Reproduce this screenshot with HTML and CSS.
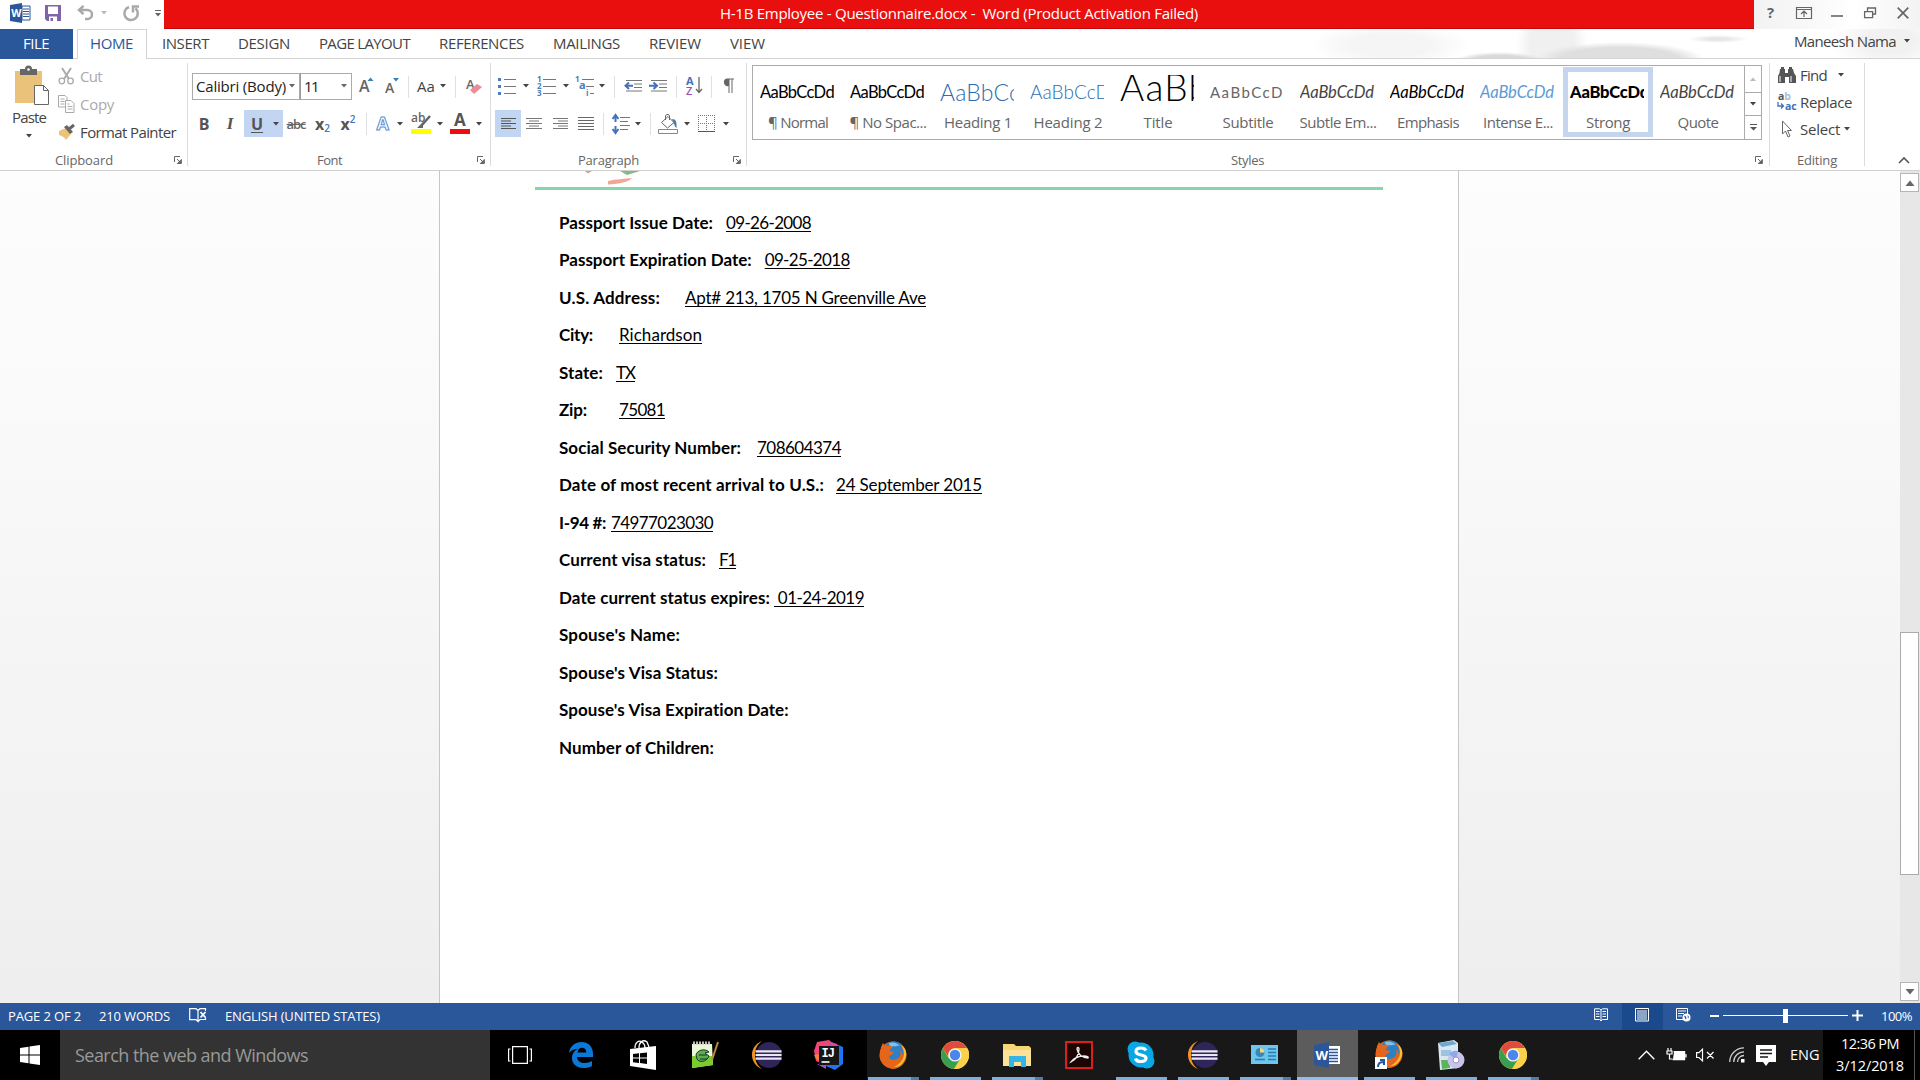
FILE: index.html
```html
<!DOCTYPE html>
<html lang="en">
<head>
<meta charset="utf-8">
<title>H-1B Employee - Questionnaire.docx - Word</title>
<link rel="stylesheet" href="styles.css">
</head>
<body>
<svg width="0" height="0" class="defs">
  <symbol id="caret" viewBox="0 0 6 4"><path d="M0 0h6L3 3.6z" fill="currentColor"/></symbol>
  <symbol id="launch" viewBox="0 0 8 8"><path d="M.5 6V.5H6M3 3l3.500 3.500M7.300 3.500v4h-4z" fill="none" stroke="#666"/><path d="M7.500 3.500v4h-4z" fill="#666"/></symbol>
  <symbol id="chrome" viewBox="0 0 28 28">
    <circle cx="14" cy="14" r="14" fill="#fbd04b"/>
    <path d="M1.900 7A14 14 0 0 0 13 28L19.500 17.500 14 14 7.500 17z" fill="#3a9e4f"/>
    <path d="M26.100 7H14l6 10.500L13 28A14 14 0 0 0 26.100 7z" fill="#fbd04b"/>
    <path d="M1.900 7A14 14 0 0 1 26.100 7H14a7 7 0 0 0-6.500 9z" fill="#e04a3f"/>
    <circle cx="14" cy="14" r="6.600" fill="#f4f4f4"/><circle cx="14" cy="14" r="5.200" fill="#4a86ee"/>
  </symbol>
  <symbol id="firefox" viewBox="0 0 28 28">
    <circle cx="14" cy="14" r="13.500" fill="#e8701a"/>
    <circle cx="15" cy="11.500" r="11" fill="#2f7fc4"/>
    <path d="M10 2a11 11 0 0 1 11 3c-3-1-4 1-7 0-1 2-4 1-4-3z" fill="#7cc3ec"/>
    <path d="M2 6c1-1 1-3 2-4 1 2 3 3 5 3 2-1 3 0 5 1-2 1-3 2-3 4 1 1 3 0 4 1-1 3-4 3-5 5 1 3 5 4 8 2 4-2 4-6 3-9 2 2 2 3 3 5 1-5-1-8-4-11 6 2 8 8 7 13-1 7-7 12-13 12C5 27 0 20 1 13c0-3 1-5 1-7z" fill="#e5651a"/>
    <path d="M22 4c5 3 6.500 9 4 14-2 5-6 8-11 8 6-3 10-8 10-13 0-4-1-6-3-9z" fill="#f9c22e"/>
  </symbol>
  <symbol id="eclipse" viewBox="0 0 30 28">
    <path d="M10 0C3 3 0 8 0 14s4 12 10 14C5 24 3 20 3 14S5 4 10 0z" fill="#f0942a"/>
    <circle cx="17" cy="14" r="13" fill="#2f2558"/>
    <path d="M3.500 10.300h26M3.500 14h26M3.500 17.700h26" stroke="#e9e7f2" stroke-width="2.200"/>
  </symbol>
</svg>

<header class="titlebar">
  <div class="qat">
    <svg width="21" height="20" viewBox="0 0 21 20"><path d="M12 3h8v14h-8z" fill="#fff" stroke="#2b579a"/><path d="M13 6h6M13 8.500h6M13 11h6M13 13.500h6" stroke="#2b579a"/><path d="M0 2 12 0v20L0 18z" fill="#2b579a"/><text x="1.200" y="14" class="ico-w" font-size="10.500">W</text></svg>
    <svg width="16" height="16" viewBox="0 0 16 16"><path d="M0 0h16v16H2l-2-2z" fill="#8064a8"/><path d="M3 1.500h10V9H3zM4 11.500h8V16H4z" fill="#fff"/><path d="M5.500 13h2.500v3H5.500z" fill="#8064a8"/></svg>
    <svg width="18" height="16" viewBox="0 0 18 16"><path d="M2 5h8.500a4.500 4.500 0 0 1 0 9H8M6.500 .8 2 5l4.500 4.200" fill="none" stroke="#a9a9a9" stroke-width="2.500"/></svg>
    <svg class="lt" width="6" height="4"><use href="#caret"/></svg>
    <svg width="17" height="17" viewBox="0 0 17 17"><path d="M6 2a6.700 6.700 0 1 0 6.500 1.300" fill="none" stroke="#a9a9a9" stroke-width="2.500"/><path d="M10 7.500V1.500h6" fill="none" stroke="#a9a9a9" stroke-width="2.500"/></svg>
    <svg width="6" height="7" viewBox="0 0 6 7"><path d="M0 .5h6" stroke="#666"/><path d="M0 3h6L3 6.500z" fill="#666"/></svg>
  </div>
  <div class="title"><span data-w="478">H-1B Employee - Questionnaire.docx -&nbsp; Word (Product Activation Failed)</span></div>
  <div class="winbtns">
    <b>?</b>
    <svg width="16" height="12" viewBox="0 0 16 12"><path d="M.5.5h15v11H.5zM.5 2.500h15M8 10V4.500M5 7l3-3 3 3" fill="none" stroke="#666" stroke-width="1.200"/></svg>
    <svg width="12" height="12" viewBox="0 0 12 12"><path d="M0 9h12" stroke="#666" stroke-width="1.600"/></svg>
    <svg width="12" height="12" viewBox="0 0 12 12"><path d="M.6 4.600h8v6h-8zM3.500 4V1h8v6H9" fill="none" stroke="#666" stroke-width="1.300"/></svg>
    <svg width="12" height="12" viewBox="0 0 12 12"><path d="m.7.7 10.600 10.600M11.300.7.7 11.300" stroke="#666" stroke-width="1.700"/></svg>
  </div>
</header>

<nav class="tabs">
  <div class="file"><span data-w="26">FILE</span></div>
  <div class="home"><span data-w="43">HOME</span></div>
  <div class="tab"><span data-w="47">INSERT</span></div>
  <div class="tab"><span data-w="52">DESIGN</span></div>
  <div class="tab"><span data-w="91">PAGE LAYOUT</span></div>
  <div class="tab"><span data-w="85">REFERENCES</span></div>
  <div class="tab"><span data-w="67">MAILINGS</span></div>
  <div class="tab"><span data-w="52">REVIEW</span></div>
  <div class="tab"><span data-w="35">VIEW</span></div>
  <div class="user"><span data-w="102">Maneesh Nama</span><svg width="6" height="4"><use href="#caret"/></svg></div>
</nav>

<section class="ribbon">
  <div class="group clip">
    <div class="clip-body">
      <div class="paste">
        <svg width="36" height="40" viewBox="0 0 36 40"><path d="M1 5h27v32H1z" fill="#ebc27a"/><path d="M6 3h5a3.500 3.500 0 0 1 7 0h5v6H6z" fill="#666"/><circle cx="14.500" cy="3.500" r="1.300" fill="#fff"/><path d="M20.500 19.500h9l5 5v14h-14z" fill="#fff" stroke="#666"/><path d="M29.500 19.500v5h5" fill="none" stroke="#666"/></svg>
        <span data-w="34">Paste</span>
        <svg width="6" height="4"><use href="#caret"/></svg>
      </div>
      <div class="clip-list">
        <div class="off"><svg width="17" height="18" viewBox="0 0 17 18"><path d="M4 1l7 11M13 1L6 12" stroke="#aaa" stroke-width="2"/><circle cx="3.800" cy="14" r="2.800" fill="none" stroke="#aaa" stroke-width="1.300"/><circle cx="12.500" cy="14" r="2.800" fill="none" stroke="#aaa" stroke-width="1.300"/></svg><span data-w="22">Cut</span></div>
        <div class="off"><svg width="17" height="18" viewBox="0 0 17 18"><path d="M7 12H.5V.5H7l2 2V5M2.500 4h4M2.500 6.500h4M2.500 9h4M7.500 5.500H13l3 3v9H7.500zM9.500 9h2M9.500 11.500h5M9.500 14h5" fill="none" stroke="#aaa"/></svg><span data-w="34">Copy</span></div>
        <div><svg width="17" height="18" viewBox="0 0 17 18"><path d="M1 8l7-3 5 6-5 6c-2-3-4-4-7-5z" fill="#ebc27a"/><path d="M6 4l3-2 6 7-3 2z" fill="#666"/><path d="m11 6 5-4" stroke="#666" stroke-width="3"/></svg><span data-w="96">Format Painter</span></div>
      </div>
    </div>
    <div class="foot"><span data-w="58">Clipboard</span><svg width="8" height="8"><use href="#launch"/></svg></div>
  </div>
  <i class="sep"></i>

  <div class="group font">
    <div class="f1">
      <div class="combo"><div class="clipname"><span data-w="90">Calibri (Body)</span></div><svg width="6" height="4"><use href="#caret"/></svg></div>
      <div class="combo"><span data-w="14">11</span><svg width="6" height="4"><use href="#caret"/></svg></div>
      <svg width="16" height="18" viewBox="0 0 16 18"><text x="0" y="15" class="ga" font-size="16">A</text><path d="M8.500 4h6l-3-3.500z" fill="#3a7fb8"/></svg>
      <svg width="14" height="18" viewBox="0 0 14 18"><text x="0" y="16" class="ga" font-size="14">A</text><path d="M8 1h6l-3 3.500z" fill="#3a7fb8"/></svg>
      <i class="tick"></i>
      <span class="aa" data-w="18">Aa</span>
      <svg width="6" height="4"><use href="#caret"/></svg>
      <i class="tick"></i>
      <svg width="17" height="18" viewBox="0 0 17 18"><text x="0" y="12" class="ga" font-size="13">A</text><path d="m4 13 7-6 5 3-8 7z" fill="#ec8b97"/></svg>
    </div>
    <div class="f2">
      <b class="g">B</b><b class="g it">I</b>
      <div class="ubox"><b class="g un">U</b><svg width="6" height="4"><use href="#caret"/></svg></div>
      <span class="strike" data-w="19">abc</span>
      <span class="g sx"><b>x</b><em>2</em></span>
      <span class="g sx up"><b>x</b><em>2</em></span>
      <i class="tick"></i>
      <svg width="18" height="20" viewBox="0 0 18 20"><text x="2.500" y="16" font-size="18" class="fx">A</text></svg>
      <svg width="6" height="4"><use href="#caret"/></svg>
      <svg width="21" height="21" viewBox="0 0 21 21"><text x="0" y="9" font-size="12" class="ga">ab</text><path d="m19 3-8 9" stroke="#666" stroke-width="2.500"/><path d="m12 9-6 6h6z" fill="#666"/><path d="M0 16h20v5H0z" fill="#ff0"/></svg>
      <svg width="6" height="4"><use href="#caret"/></svg>
      <svg width="20" height="21" viewBox="0 0 20 21"><text x="4" y="13" font-size="17" class="gb">A</text><path d="M0 16h20v5H0z" fill="#f00b12"/></svg>
      <svg width="6" height="4"><use href="#caret"/></svg>
    </div>
    <div class="foot"><span data-w="25">Font</span><svg width="8" height="8"><use href="#launch"/></svg></div>
  </div>
  <i class="sep"></i>

  <div class="group para">
    <div class="p1">
      <svg width="18" height="18" viewBox="0 0 18 18"><path d="M6 2.500h12M6 9.500h12M6 16.500h12" stroke="#777"/><path d="M0 1h3v3H0zM0 8h3v3H0zM0 15h3v3H0z" fill="#4a7ebb"/></svg>
      <svg width="6" height="4"><use href="#caret"/></svg>
      <svg width="19" height="20" viewBox="0 0 19 20"><path d="M6 3.500h13M6 10.500h13M6 17.500h13" stroke="#777"/><g class="nm"><text x="0" y="6">1</text><text x="0" y="13">2</text><text x="0" y="20">3</text></g></svg>
      <svg width="6" height="4"><use href="#caret"/></svg>
      <svg width="20" height="20" viewBox="0 0 20 20"><path d="M7 3.500h12M11 10.500h8M15 17.500h4" stroke="#777"/><g class="nm"><text x="0" y="6">1</text><text x="4" y="13" font-size="11">a</text><text x="11" y="20">i</text></g></svg>
      <svg width="6" height="4"><use href="#caret"/></svg>
      <i class="tick"></i>
      <svg width="18" height="12" viewBox="0 0 18 12"><path d="M2 .5h16M10 4h8M10 7.500h8M2 11h16" stroke="#777"/><path d="M2 5.700h7M5 2.500 1.500 5.700 5 9" fill="none" stroke="#4472b8" stroke-width="2"/></svg>
      <svg width="18" height="12" viewBox="0 0 18 12"><path d="M2 .5h16M10 4h8M10 7.500h8M2 11h16" stroke="#777"/><path d="M0 5.700h7M4.500 2.500 8 5.700 4.500 9" fill="none" stroke="#4472b8" stroke-width="2"/></svg>
      <i class="tick"></i>
      <svg width="17" height="20" viewBox="0 0 17 20"><text x="0" y="9" font-size="11" class="bl">A</text><text x="0" y="19" font-size="11" class="pu">Z</text><path d="M13 1v15M10 13l3 3.500 3-3.500" fill="none" stroke="#666" stroke-width="1.300"/></svg>
      <i class="tick"></i>
      <svg width="11" height="15" viewBox="0 0 11 15"><path d="M4 .5h7v1H9.500V15h-1V1.500h-2V15h-1V8A3.800 3.800 0 0 1 4 .5z" fill="#666"/></svg>
    </div>
    <div class="p2">
      <div class="on"><svg width="15" height="12" viewBox="0 0 15 12"><path d="M0 .5h15M0 3h10M0 5.500h15M0 8h10M0 10.500h15" stroke="#555"/></svg></div>
      <svg width="16" height="12" viewBox="0 0 16 12"><path d="M0 .5h16M3 3h10M0 5.500h16M3 8h10M0 10.500h16" stroke="#777"/></svg>
      <svg width="15" height="12" viewBox="0 0 15 12"><path d="M0 .5h15M5 3h10M0 5.500h15M5 8h10M0 10.500h15" stroke="#777"/></svg>
      <svg width="16" height="14" viewBox="0 0 16 14"><path d="M0 .5h16M0 3.500h16M0 6.500h16M0 9.500h16M0 12.500h16" stroke="#666"/></svg>
      <i class="tick"></i>
      <svg width="18" height="20" viewBox="0 0 18 20"><path d="M8 3.500h10M8 7.500h8M8 11.500h10M8 15.500h8" stroke="#777"/><path d="M3.500 2v6M3.500 12v6M.5 5l3-4 3 4M.5 15l3 4 3-4" fill="none" stroke="#4472b8" stroke-width="2"/></svg>
      <svg width="6" height="4"><use href="#caret"/></svg>
      <i class="tick"></i>
      <svg width="20" height="20" viewBox="0 0 20 20"><path d="M.5 15.500h19v4H.5z" fill="#fff" stroke="#888"/><path d="m10 2.500 6 6-6.500 5.500-6-5.500zM7.500 6V3a2 2 0 0 1 4-1v4" fill="none" stroke="#666"/><path d="M14 5c4 0 5 3 4.500 9-2-1-2-4-3-5z" fill="#4a7ea8"/></svg>
      <svg width="6" height="4"><use href="#caret"/></svg>
      <svg width="17" height="17" viewBox="0 0 17 17"><path d="M.5 0v17M16.500 0v17M8.500 0v17M0 .5h17M0 8.500h17" stroke="#777" stroke-dasharray="1 1"/><path d="M0 16.500h17" stroke="#555"/></svg>
      <svg width="6" height="4"><use href="#caret"/></svg>
    </div>
    <div class="foot"><span data-w="61">Paragraph</span><svg width="8" height="8"><use href="#launch"/></svg></div>
  </div>
  <i class="sep"></i>

  <div class="group styles">
    <div class="gallery">
      <div class="cards">
        <div class="card"><div class="pv"><span data-w="74">AaBbCcDd</span></div><span data-w="60">¶ Normal</span></div>
        <div class="card"><div class="pv"><span data-w="74">AaBbCcDd</span></div><span data-w="77">¶ No Spac...</span></div>
        <div class="card"><div class="pv h1"><span data-w="80">AaBbCc</span></div><span data-w="68">Heading 1</span></div>
        <div class="card"><div class="pv h2"><span data-w="80">AaBbCcD</span></div><span data-w="69">Heading 2</span></div>
        <div class="card"><div class="pv tt"><span data-w="90">AaBb</span></div><span data-w="29">Title</span></div>
        <div class="card"><div class="pv st"><span data-w="74">AaBbCcD</span></div><span data-w="51">Subtitle</span></div>
        <div class="card"><div class="pv i1"><span data-w="74">AaBbCcDd</span></div><span data-w="77">Subtle Em...</span></div>
        <div class="card"><div class="pv i2"><span data-w="74">AaBbCcDd</span></div><span data-w="62">Emphasis</span></div>
        <div class="card"><div class="pv i3"><span data-w="74">AaBbCcDd</span></div><span data-w="70">Intense E...</span></div>
        <div class="card sel"><div class="pv sb"><span data-w="79">AaBbCcDd</span></div><span data-w="44">Strong</span></div>
        <div class="card"><div class="pv i4"><span data-w="74">AaBbCcDd</span></div><span data-w="41">Quote</span></div>
      </div>
      <div class="gscroll">
        <div class="lt"><svg class="flip" width="6" height="4"><use href="#caret"/></svg></div>
        <div><svg width="6" height="4"><use href="#caret"/></svg></div>
        <div><svg width="7" height="7" viewBox="0 0 7 7"><path d="M0 .5h7" stroke="#555"/><path d="M0 3h7L3.500 6.500z" fill="#555"/></svg></div>
      </div>
    </div>
    <div class="foot"><span data-w="33">Styles</span><svg width="8" height="8"><use href="#launch"/></svg></div>
  </div>
  <i class="sep"></i>

  <div class="group edit">
    <div class="elist">
      <div><svg width="20" height="18" viewBox="0 0 20 18"><path d="M3 3h5v4h3V3h5l1 4 2 3v7h-7v-6H8v6H1v-7l1.500-3z" fill="#555"/><path d="M4 1h3v2H4zM12 1h3v2h-3z" fill="#555"/><path d="M3 10v6M14 10v6" stroke="#fff"/></svg><span data-w="27">Find</span><svg class="c1" width="6" height="4"><use href="#caret"/></svg></div>
      <div><svg width="20" height="18" viewBox="0 0 20 18"><text x="1" y="7" font-size="10.500" class="gb">a<tspan class="lb">b</tspan></text><text x="8" y="17" font-size="10.500" class="bl">ac</text><path d="M1 9v4h5M4 10.500 6.500 13 4 15.500" fill="none" stroke="#4472b8" stroke-width="1.300"/></svg><span data-w="52">Replace</span></div>
      <div><svg width="20" height="18" viewBox="0 0 20 18"><path d="M5.500 1v13l3-3 2.500 6 2-1-2.500-5.500h4z" fill="#fff" stroke="#666"/></svg><span data-w="40">Select</span><svg class="c2" width="6" height="4"><use href="#caret"/></svg></div>
    </div>
    <div class="foot"><span data-w="40">Editing</span></div>
  </div>
  <i class="sep"></i>
  <svg class="collapse" width="12" height="8" viewBox="0 0 12 8"><path d="m1 7 5-5 5 5" fill="none" stroke="#555" stroke-width="1.600"/></svg>
</section>

<main class="work">
  <article class="page">
    <div class="letterhead">
      <svg width="100" height="14" viewBox="0 0 100 14"><path d="M3 0h7L6 2.500z" fill="#c9a98f"/><path d="M38 0h20l-13 4z" fill="#86b888"/><path d="M26 10c8-2 16-2 24-3-4 4-12 6-24 6.500z" fill="#f0a795"/></svg>
    </div>
    <div class="lines">
      <p><b data-w="154">Passport Issue Date:</b><u class="g13" data-w="85">09-26-2008</u></p>
      <p><b data-w="193">Passport Expiration Date:</b><u class="g13" data-w="85">09-25-2018</u></p>
      <p><b data-w="101">U.S. Address:</b><u class="g25" data-w="241">Apt# 213, 1705 N Greenville Ave</u></p>
      <p><b data-w="34">City:</b><u class="g26" data-w="83">Richardson</u></p>
      <p><b data-w="44">State:</b><u class="g13" data-w="19">TX</u></p>
      <p><b data-w="28">Zip:</b><u class="g32" data-w="46">75081</u></p>
      <p><b data-w="182">Social Security Number:</b><u class="g16" data-w="84">708604374</u></p>
      <p><b data-w="265">Date of most recent arrival to U.S.:</b><u class="g12" data-w="146">24 September 2015</u></p>
      <p><b data-w="47">I-94 #:</b><u class="g5" data-w="102">74977023030</u></p>
      <p><b data-w="147">Current visa status:</b><u class="g13" data-w="17">F1</u></p>
      <p><b data-w="211">Date current status expires:</b><u class="g4" data-w="90">&nbsp;01-24-2019</u></p>
      <p><b data-w="121">Spouse's Name:</b></p>
      <p><b data-w="159">Spouse's Visa Status:</b></p>
      <p><b data-w="230">Spouse's Visa Expiration Date:</b></p>
      <p><b data-w="155">Number of Children:</b></p>
    </div>
  </article>
  <div class="vbar">
    <div class="vbtn"><svg class="flip" width="10" height="6"><use href="#caret"/></svg></div>
    <div class="thumb"></div>
    <div class="vbtn end"><svg width="10" height="6"><use href="#caret"/></svg></div>
  </div>
</main>

<footer class="status">
  <span data-w="73">PAGE 2 OF 2</span>
  <span class="s2" data-w="71">210 WORDS</span>
  <svg class="s3" width="18" height="15" viewBox="0 0 18 15"><path d="M9 2.500 7 .7H.7v11H7L9 13.500V2.500l2-1.800h5.500V3M16.500 9.500v2H11l-2 2" fill="none" stroke="#fff" stroke-width="1.200"/><path d="m11.500 4 5 5.500M16.500 4l-5 5.500" stroke="#fff" stroke-width="1.800"/></svg>
  <span class="s4" data-w="155">ENGLISH (UNITED STATES)</span>
  <div class="views">
    <div><svg width="14" height="14" viewBox="0 0 14 14"><path d="M7 2v11M7 2 5.500.8H.6v10.700h5L7 13l1.500-1.500h5V.8h-5zM2 3.500h3.500M2 6h3.500M2 8.500h3.500M8.500 3.500H12M8.500 6H12M8.500 8.500H12" fill="none" stroke="#fff"/></svg></div>
    <div class="cur"><svg width="14" height="14" viewBox="0 0 14 14"><path d="M.5.5h13v12.500H.5zM2 3h10M2 5h10M2 7h10M2 9h10M2 11h10" fill="none" stroke="#fff"/></svg></div>
    <div><svg width="15" height="14" viewBox="0 0 15 14"><path d="M7 11.500H.5V.5h11V6M2 3h8M2 5.500h6M2 8h4" fill="none" stroke="#fff"/><circle cx="10.500" cy="9.500" r="4" fill="#fff"/><path d="m8 7.500 2 1 .5 2-1 1zM11.500 7l1.500 2-1 1.500z" fill="#2a579a"/></svg></div>
  </div>
  <i class="minus"></i>
  <div class="zoomline"><i></i></div>
  <svg class="plus" width="11" height="11" viewBox="0 0 11 11"><path d="M5.500 0v11M0 5.500h11" stroke="#fff" stroke-width="2"/></svg>
  <span class="pct" data-w="31">100%</span>
</footer>

<div class="taskbar">
  <div class="start"><svg width="20" height="20" viewBox="0 0 20 20"><path d="M0 3 8.500 1.800v7.700H0zM9.500 1.600 20 0v9.500H9.500zM0 10.500h8.500v7.700L0 17zM9.500 10.500H20V20L9.500 18.400z" fill="#fff"/></svg></div>
  <div class="search"><span data-w="233">Search the web and Windows</span></div>
  <div class="pins">
    <div><svg width="24" height="18" viewBox="0 0 24 18"><path d="M4.600.6h14.800v16.800H4.600zM2.500 3H.6v12h1.900M21.500 3h1.900v12h-1.900" fill="none" stroke="#fff" stroke-width="1.200"/></svg></div>
    <div><svg width="24" height="26" viewBox="0 0 24 26"><path d="M0 11C1 4 6 0 12.500 0 20 0 24 5 24 12v3H8c.5 4 3.500 6 7.500 6 3 0 5.500-1 7.500-2v5c-2.500 1.400-5 2-8.500 2C7 26 3 21.500 3 16c0-4 2.500-7.500 6-9.200C5 7.200 2 8.500 0 11zm8.500-.5h8.800c0-3-1.500-4.700-4.300-4.700-2.500 0-4 1.700-4.500 4.700z" fill="#0a78d7"/></svg></div>
    <div><svg width="27" height="30" viewBox="0 0 27 30"><path d="M0 9 26 6v24L0 26z" fill="#fff"/><path d="M5 8C5 2 9 0 12 2s3 4 3 6M9 8c0-6 4-9 8-6l2 5" fill="none" stroke="#fff" stroke-width="1.300"/><path d="m3 14 6-.7v4.200H3zM10 13.200l7-.8v5.100h-7zM3 18.500h6V23l-6-.7zM10 18.500h7V24l-7-.9z" fill="#000"/></svg></div>
    <div><svg width="28" height="28" viewBox="0 0 28 28"><path d="M1 3h20l1 21-21 3z" fill="#e9f6d8"/><path d="M1 15h20.500l.5 9-21 3z" fill="#7ccc30"/><path d="M5 14c1-5 9-7 13-3l-4 1 4 3c-2 6-10 7-12 3z" fill="#5fae4c" stroke="#173d22"/><path d="M8 14h8M9 18h7" stroke="#133"/><path d="M2 2h18" stroke="#bbb" stroke-width="3" stroke-dasharray="2 1"/><path d="m27 1-6 18" stroke="#b98a3a" stroke-width="2"/></svg></div>
    <div><svg width="30" height="28"><use href="#eclipse"/></svg></div>
    <div><svg width="30" height="30" viewBox="0 0 30 30"><path d="M3 2 15 0l6 5-10 20-9-4-2-10z" fill="#ef4778"/><path d="M17 2l12 5v17l-8 6-9-4z" fill="#1d74f5"/><path d="M17 2l6 2 2 10-9-4z" fill="#e0469c"/><path d="M0 15l6-1 3 8-7-3z" fill="#fc7a3c"/><path d="M3 24h9v5z" fill="#a14ce0"/><path d="M5 6h20v19H5z" fill="#151515"/><text x="7.500" y="17" font-size="12" class="ico-w mono">IJ</text><path d="M7.500 22h8" stroke="#fff" stroke-width="1.600"/></svg></div>
  </div>
  <div class="apps">
    <div class="run two"><svg width="28" height="28"><use href="#firefox"/></svg></div>
    <div class="run"><svg width="28" height="28"><use href="#chrome"/></svg></div>
    <div class="run two"><svg width="28" height="26" viewBox="0 0 28 26"><path d="M0 2h11l2 2h13l2 2v18H0z" fill="#f7d774"/><path d="M0 8h28v16H0z" fill="#fbe297"/><path d="M6 14h17v11h-5v-5h-7v5H6z" fill="#35b4e8"/></svg></div>
    <div><svg width="28" height="28" viewBox="0 0 28 28"><path d="M1 1h26v26H1z" fill="#1d0504" stroke="#d8211b" stroke-width="2"/><path d="M6 21c5-2 8-8 8-13 0-2-2-2-2 0 1 5 5 9 11 9 1-1-1-2-4-2-5 0-10 2-13 6z" fill="none" stroke="#eee" stroke-width="1.300"/></svg></div>
    <div class="run"><svg width="28" height="28" viewBox="0 0 28 28"><circle cx="14" cy="14" r="12.500" fill="#0aa6e6"/><circle cx="8" cy="8" r="7.500" fill="#0aa6e6"/><circle cx="20" cy="20" r="7.500" fill="#0aa6e6"/><path d="M19 9.500c-1-2-3-2.500-5-2.500-3 0-5 1.200-5 3.500 0 5 10 2 10 6.500 0 2.500-2.500 3.500-5 3.500-3 0-5-1-5.500-3" fill="none" stroke="#fff" stroke-width="3.200"/></svg></div>
    <div class="run"><svg width="30" height="28"><use href="#eclipse"/></svg></div>
    <div class="run two"><svg width="27" height="19" viewBox="0 0 27 19"><path d="M0 0h27v19H0z" fill="#6cc6ee"/><circle cx="9" cy="7.500" r="4.500" fill="#3a86b8"/><path d="M9 7.500V3a4.500 4.500 0 0 1 4.500 4.500z" fill="#f6d879"/><path d="M17 4h8M17 7.500h8M17 11h8M17 14.500h8M4 14.500h10" stroke="#2c7bb0" stroke-width="1.300"/></svg></div>
    <div class="run active"><svg width="26" height="26" viewBox="0 0 26 26"><path d="M14 4h12v18H14z" fill="#fff"/><path d="M15 7.500h9M15 10.500h9M15 13.500h9M15 16.500h9M15 19.500h9" stroke="#2b579a" stroke-width="1.300"/><path d="M0 3 15 0v26L0 23z" fill="#2b579a"/><text x="1.500" y="18" class="ico-w" font-size="13">W</text></svg></div>
    <div class="run"><svg width="28" height="30" viewBox="0 0 28 30"><use href="#firefox" width="28" height="28"/><path d="M0 17h12v12H0z" fill="#fff"/><path d="M3 27c0-4 2-5 5-5M5 20h4v5" fill="none" stroke="#23559c" stroke-width="2"/></svg></div>
    <div class="run"><svg width="28" height="30" viewBox="0 0 28 30"><path d="M1 3 17 0l4 3v25L3 30z" fill="#dbe8f2"/><path d="M1 3 16 1l4 3-15 3z" fill="#6ea9d0"/><path d="M4 10h10v6H4z" fill="#9cc4e0"/><path d="M4 20h9v8l-8 1z" fill="#5cb45a"/><circle cx="19" cy="20" r="8.500" fill="#c9c4ea"/><path d="M19 20 12 14a9 9 0 0 1 9-3z" fill="#8fa8ea"/><circle cx="19" cy="20" r="3" fill="#fff" stroke="#9a8fcb"/></svg></div>
    <div class="run two"><svg width="28" height="28"><use href="#chrome"/></svg></div>
  </div>
  <div class="tray">
    <svg width="17" height="10" viewBox="0 0 17 10"><path d="m.7 9.300 7.800-8 7.800 8" fill="none" stroke="#fff" stroke-width="1.400"/></svg>
    <svg width="20" height="14" viewBox="0 0 20 14"><path d="M1 0v3M4 0v3M0 3h5v3H0zM2.500 6v5h3" fill="none" stroke="#fff" stroke-width="1.200"/><path d="M6.600 3.600h11v8h-12M19 6v3.500" fill="none" stroke="#fff" stroke-width="1.200"/><path d="M7 4h10v7.500H6z" fill="#fff"/></svg>
    <svg width="18" height="14" viewBox="0 0 18 14"><path d="M.6 4.600H3l3.500-3.500v11.800L3 9.500H.6zM11 4l6.500 6.500M17.500 4 11 10.500" fill="none" stroke="#fff" stroke-width="1.200"/></svg>
    <svg width="16" height="16" viewBox="0 0 16 16"><path d="M.7 15A14.300 14.300 0 0 1 15 .8M4.700 15A10.300 10.300 0 0 1 15 4.800M8.500 15A6.500 6.500 0 0 1 15 8.500" fill="none" stroke="#ccc" stroke-width="1.300"/><path d="M12 12h3.500v3.500H12z" fill="#fff"/></svg>
    <svg width="20" height="21" viewBox="0 0 20 21"><path d="M0 0h20v17h-7l-3 4-3-4H0z" fill="#fff"/><path d="M4 5h12M4 8.500h12M4 12h8" stroke="#181818" stroke-width="1.300"/></svg>
    <span class="eng" data-w="28">ENG</span>
  </div>
  <div class="clock"><span data-w="58">12:36 PM</span><span data-w="68">3/12/2018</span></div>
  <div class="desk"></div>
</div>
<script src="fit.js"></script>
</body>
</html>
```
FILE: styles.css
```css
* { box-sizing: border-box; }
body { margin: 0; width: 1920px; height: 1080px; overflow: hidden; display: flex; flex-direction: column; background: #fff; color: #444; font: 15px/20px "Open Sans", "Noto Sans", sans-serif; }
svg { display: block; flex: none; overflow: visible; }
.defs { position: absolute; }
[data-w] { white-space: pre; display: inline-block; flex: none; }
.lt { color: #bbb; }
.flip { transform: scaleY(-1); }
.ico-w { fill: #fff; font-weight: 700; }
.mono { font-family: "Liberation Mono", monospace; letter-spacing: -1px; }

.titlebar { height: 29px; flex: none; display: flex; background: #fff; }
.qat { width: 164px; padding: 0 4px 3px 10px; display: grid; grid-template-columns: 35px 32px 24px 22px 32px 6px; align-items: center; color: #666; }
.title { width: 1590px; background: #ea0f0f; border-bottom: 1px solid #c3080c; color: #fff; display: flex; align-items: center; padding: 0 0 2px 556px; font-size: 15px; }
.winbtns { width: 166px; padding: 0 0 3px 13px; display: grid; grid-template-columns: 29px 35px 33px 33px 12px; align-items: center; color: #666; background: linear-gradient(90deg, #f2f2f2, #fafafa 40%, #fff 60%, #f3f3f3); }
.winbtns b { margin-top: -2px; }

.tabs { height: 30px; flex: none; display: flex; border-bottom: 1px solid #d4d4d4;
  background:
    radial-gradient(ellipse 85px 18px at 1620px 31px, #dfdfdf 70%, transparent 100%),
    radial-gradient(ellipse 44px 8px at 1500px 31px, #dadada 60%, transparent 100%),
    radial-gradient(ellipse 36px 40px at 1552px 14px, #f0f0f0 60%, transparent 100%),
    radial-gradient(ellipse 80px 22px at 1390px 16px, #f5f5f5 50%, transparent 100%),
    radial-gradient(ellipse 30px 4px at 1718px 10px, #e6e6e6 30%, transparent 100%),
    radial-gradient(ellipse 60px 30px at 1890px 12px, #f1f1f1 40%, transparent 100%), #fff; }
.tabs > div { height: 30px; display: flex; align-items: center; padding-bottom: 2px; }
.tabs .file { width: 73px; background: #2a579a; color: #fff; padding-left: 23px; margin-right: 4px; }
.tabs .home { width: 70px; border: 1px solid #d4d4d4; border-bottom: 0; background: #fff; color: #2a579a; padding: 0 0 3px 12px; margin-right: 15px; }
.tab { margin-right: 29px; }
.tabs .user { margin-left: auto; padding: 0 10px 6px 0; gap: 8px; }

.ribbon { height: 112px; flex: none; display: flex; border-bottom: 1px solid #d0d0d0; background: #fff; }
.sep { width: 1px; height: 103px; margin-top: 4px; background: #dcdcdc; flex: none; }
.group { display: flex; flex-direction: column; }
.foot { margin-top: auto; height: 21px; padding-right: 5px; display: flex; align-items: center; justify-content: space-between; font-size: 13px; color: #666; }
.clip { width: 187px; }
.clip .foot { padding-left: 55px; }
.clip-body { display: flex; padding: 6px 0 0 12px; }
.paste { width: 46px; display: flex; flex-direction: column; align-items: flex-start; }
.paste > svg:first-child { margin: 1px 0 0 2px; }
.paste span { margin-top: 1px; }
.paste svg:last-child { margin: 7px 0 0 14px; }
.clip-list { display: flex; flex-direction: column; gap: 8px; padding-top: 1px; }
.clip-list > div { display: flex; align-items: center; gap: 5px; }
.off { color: #aaa; }

.font { width: 302px; padding-left: 4px; }
.font .foot { padding-left: 125px; }
.f1, .f2, .p1, .p2 { display: grid; height: 27px; align-items: center; justify-items: center; }
.f1, .p1 { margin-top: 14px; margin-bottom: 10px; }
.f1 { grid-template-columns: 108px 52px 29px 21px 12px 24px 10px 14px 25px; }
.f2 { grid-template-columns: 24px 28px 39px 26px 27px 24px 12px 22px 12px 31px 6px 34px 4px; padding-bottom: 1px; }
.f1 > svg, .p1 > svg { margin-top: -2px; }
.aa { margin-top: -2px; }
.combo { width: 100%; height: 27px; border: 1px solid #ababab; display: flex; align-items: center; justify-content: space-between; padding: 0 4px 2px 3px; color: #222; font-size: 15px; }
.combo + .combo { border-left-color: #999; }
.combo svg { color: #666; }
.clipname { width: 90px; overflow: hidden; }
.tick { width: 1px; height: 22px; background: #e0e0e0; }
.ga, .gb { fill: #666; font-weight: 600; }
.gb { font-weight: 700; fill: #555; }
.g { font-size: 16px; color: #555; }
.it { font: italic 700 17px "Liberation Serif", serif; }
.ubox { width: 39px; height: 27px; background: #c2d5f2; display: flex; align-items: center; justify-content: space-between; padding: 0 4px 0 7px; }
.un { text-decoration: underline; text-underline-offset: 2px; }
.strike { font-size: 13px; font-weight: 600; text-decoration: line-through; color: #666; }
.sx { display: flex; align-items: center; }
.sx em { font: 600 10px/10px "Open Sans", sans-serif; color: #4472b8; margin-top: 9px; }
.up em { margin-top: -10px; }
.fx { fill: #fff; stroke: #5b8fd0; stroke-width: 1; font-weight: 700; }
.para { width: 255px; padding-left: 4px; }
.para .foot { padding-left: 83px; }
.para .p1 { grid-template-columns: 24px 14px 26px 14px 24px 10px 14px 23px 28px 8px 28px 6px 28px; }
.p2 { grid-template-columns: 26px 26px 26px 26px 8px 27px 8px 16px 20px 18px 21px 18px; padding-bottom: 1px; }
.on { width: 26px; height: 27px; background: #c2d5f2; display: grid; place-items: center; }
.nm { font-size: 8px; font-weight: 700; fill: #4a7ebb; }
.bl { fill: #4472b8; font-weight: 700; }
.pu { fill: #9a4fb0; font-weight: 600; }
.lb { fill: #a9bfd4; }

.styles { width: 1022px; padding: 6px 6px 0 5px; }
.styles .foot { padding: 0 0 0 479px; }
.gallery { height: 75px; width: 1010px; border: 1px solid #ababab; display: flex; }
.cards { display: flex; width: 991px; }
.card { width: 90px; height: 70px; margin-top: 1px; display: flex; flex-direction: column; align-items: center; color: #666; flex: none; }
.card > span { margin-top: -1px; }
.pv { width: 74px; height: 38px; margin: 8px 2px 0 0; overflow: hidden; font: 16.5px/34px Lato, sans-serif; color: #000; }
.h1 { font-size: 23px; font-weight: 300; color: #2e6cb0; }
.h2 { font-size: 19px; font-weight: 300; color: #2e6cb0; }
.tt { font-size: 37px; font-weight: 300; line-height: 24px; }
.st { color: #666; font-size: 15px; }
.i1, .i2, .i3, .i4 { font-style: italic; }
.i1, .i4 { color: #444; }
.i3 { color: #5b9bd5; }
.sel { outline: 5px solid #c5d5ee; outline-offset: -5px; }
.sb { font-weight: 900; }
.gscroll { width: 17px; border-left: 1px solid #ababab; display: grid; grid-template-rows: 26px 23px 24px; }
.gscroll div { display: grid; place-items: center; }
.gscroll div + div { border-top: 1px solid #ababab; }

.edit { width: 94px; padding-left: 7px; }
.edit .foot { padding-left: 20px; }
.elist { padding-top: 6px; display: flex; flex-direction: column; gap: 7px; }
.elist > div { display: flex; align-items: center; height: 20px; gap: 3px; }
.c1 { margin-left: 8px; }
.c2 { margin-left: 1px; }
.collapse { margin: 97px 0 0 33px; }

.work { height: 832px; flex: none; display: flex; background: linear-gradient(#fdfdfd, #f8f8f8 40%, #eeeeee); }
.page { width: 1020px; margin-left: 439px; background: #fff; border: solid #c6c6c6; border-width: 0 1px; padding: 0 75px 0 94px; }
.letterhead { height: 19px; border-bottom: 3px solid #85d6ac; margin-left: 1px; padding-left: 47px; }
.lines { padding: 14px 0 0 25px; color: #000; font: 17px/37.470px Lato, "Open Sans", sans-serif; }
.lines p { margin: 0; height: 37.470px; display: flex; }
.lines b { font-weight: 700; }
.lines u { text-decoration-thickness: 1px; text-underline-offset: 2px; text-decoration-skip-ink: none; }
.g4 { margin-left: 4px; } .g5 { margin-left: 5px; } .g12 { margin-left: 12px; } .g13 { margin-left: 13px; }
.g16 { margin-left: 16px; } .g25 { margin-left: 25px; } .g26 { margin-left: 26px; } .g32 { margin-left: 32px; }
.vbar { width: 20px; margin-left: auto; background: #e7e7e7; padding-top: 2px; display: flex; flex-direction: column; }
.vbtn { width: 19px; height: 19px; background: #fff; border: 1px solid #b5b5b5; display: grid; place-items: center; color: #666; }
.thumb { width: 19px; height: 243px; margin-top: 440px; background: #fff; border: 1px solid #ababab; }
.end { margin-top: auto; margin-bottom: 2px; }

.status { height: 27px; flex: none; background: #2a579a; color: #fff; display: flex; align-items: center; padding: 0 0 2px 8px; font-size: 13px; }
.s2 { margin-left: 18px; }
.s3 { margin-left: 19px; }
.s4 { margin-left: 18px; }
.views { height: 27px; display: flex; margin: 2px 0 0 1201px; }
.views div { width: 41px; display: grid; place-items: center; padding: 0 1px 3px 0; }
.views .cur { background: #1b4a8c; }
.minus { width: 9px; height: 2px; margin-left: 6px; background: #fff; }
.zoomline { width: 125px; height: 14px; margin-left: 4px; display: grid; place-items: center; background: linear-gradient(#fff, #fff) 0 6px / 100% 1px no-repeat; }
.zoomline i { width: 5px; height: 14px; background: #fff; }
.plus { margin-left: 4px; }
.pct { margin-left: 18px; }

.taskbar { height: 50px; flex: none; background: #000; display: flex; color: #fff; }
.start { width: 60px; display: grid; place-items: center; }
.search { width: 430px; background: #333; color: #999; font-size: 18px; display: flex; align-items: center; padding: 0 0 1px 15px; }
.pins { display: flex; width: 377px; }
.pins div { width: 62px; display: grid; place-items: center; flex: none; }
.pins div:first-child { width: 60px; }
.apps { display: flex; background: #181818; width: 738px; padding-left: 1px; gap: 11px; }
.apps > div { width: 51px; display: grid; place-items: center; border-bottom: 3px solid transparent; flex: none; padding: 2px 2px 0 0; }
.apps .run { border-bottom-color: #7ab0e0; }
.apps .two { border-image: linear-gradient(90deg, #7ab0e0 80%, #4b7ea8 80%) 3; border-style: solid; border-width: 0 0 3px; }
.apps .active { width: 61px; margin: 0 -5px; background: #5c5c5c; border-bottom-color: #8cc0ee; }
.tray { width: 218px; background: #181818; display: grid; grid-template-columns: 29px 29px 33px 27px 34px 28px; align-items: center; padding-left: 33px; }
.eng, .clock { font-size: 14.5px; }
.clock { width: 91px; display: flex; flex-direction: column; align-items: center; padding: 3px 0 0 3px; line-height: 22px; }
.desk { width: 1px; background: #555; }
```
FILE: fit.js
```js
// Spreads each label's letters so that it takes its set width.
document.querySelectorAll('[data-w]').forEach(function (el) {
  var target = Number(el.dataset.w);
  var natural = el.getBoundingClientRect().width;
  el.style.letterSpacing = (target - natural) / el.textContent.length + 'px';
});
```
